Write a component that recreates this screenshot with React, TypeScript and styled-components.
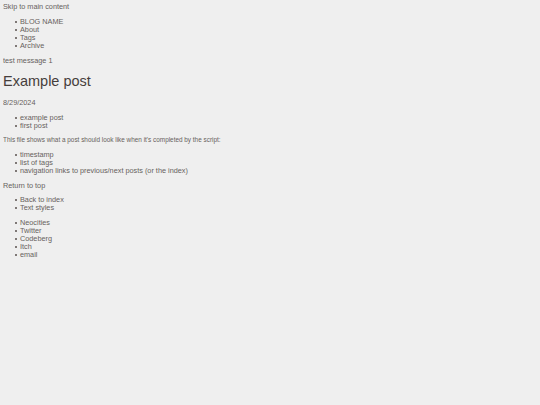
import React from 'react'
import styled, { createGlobalStyle } from 'styled-components';

const GlobalStyle = createGlobalStyle`
  html, body {
    background: #efefef;
  }
  body {
    margin: 3px 3px;
    font-family: "Liberation Sans", Arial, sans-serif;
    font-size: 7.3px;
    line-height: 8px;
    color: #675f5d;
  }
`;

const SkipLink = styled.a`
  display: block;
  color: #675f5d;
  text-decoration: none;
`;

const List = styled.ul<{ top?: number; bottom?: number }>`
  margin: ${props => props.top ?? 7}px 0 ${props => props.bottom ?? 7}px;
  padding-left: 12px;
  list-style: none;

  li::before {
    content: "";
    display: inline-block;
    width: 1.6px;
    height: 1.6px;
    border-radius: 50%;
    background: currentColor;
    margin-right: 3.4px;
    vertical-align: 1.5px;
  }

  a {
    color: #675f5d;
    text-decoration: none;
  }
`;

const Text = styled.p<{ small?: boolean }>`
  margin: ${props => props.small ? '0 0 7px' : '7px 0'};
  font-size: ${props => props.small ? '6.4px' : '7.3px'};
`;

const Title = styled.h1`
  margin: 7px 0 9px;
  font-size: 14.5px;
  line-height: 18px;
  font-weight: normal;
  color: #463e3c;
`;

const TopLink = styled.a`
  display: block;
  color: #675f5d;
  text-decoration: none;
`;

const nav = ['BLOG NAME', 'About', 'Tags', 'Archive'];
const tags = ['example post', 'first post'];
const features = ['timestamp', 'list of tags', 'navigation links to previous/next posts (or the index)'];
const pages = ['Back to index', 'Text styles'];
const socials = ['Neocities', 'Twitter', 'Codeberg', 'Itch', 'email'];

export default function App() {
  return (
    <>
      <GlobalStyle />
      <SkipLink href="#main">Skip to main content</SkipLink>
      <nav>
        <List>
          {nav.map(n => <li key={n}><a href="#">{n}</a></li>)}
        </List>
      </nav>
      <Text>test message 1</Text>
      <main id="main">
        <Title>Example post</Title>
        <Text>8/29/2024</Text>
        <List bottom={6}>
          {tags.map(t => <li key={t}><a href="#">{t}</a></li>)}
        </List>
        <Text small>This file shows what a post should look like when it's completed by the script:</Text>
        <List>
          {features.map(f => <li key={f}>{f}</li>)}
        </List>
        <TopLink href="#">Return to top</TopLink>
      </main>
      <footer>
        <List top={6}>
          {pages.map(p => <li key={p}><a href="#">{p}</a></li>)}
        </List>
        <List>
          {socials.map(s => <li key={s}><a href="#">{s}</a></li>)}
        </List>
      </footer>
    </>
  );
}
